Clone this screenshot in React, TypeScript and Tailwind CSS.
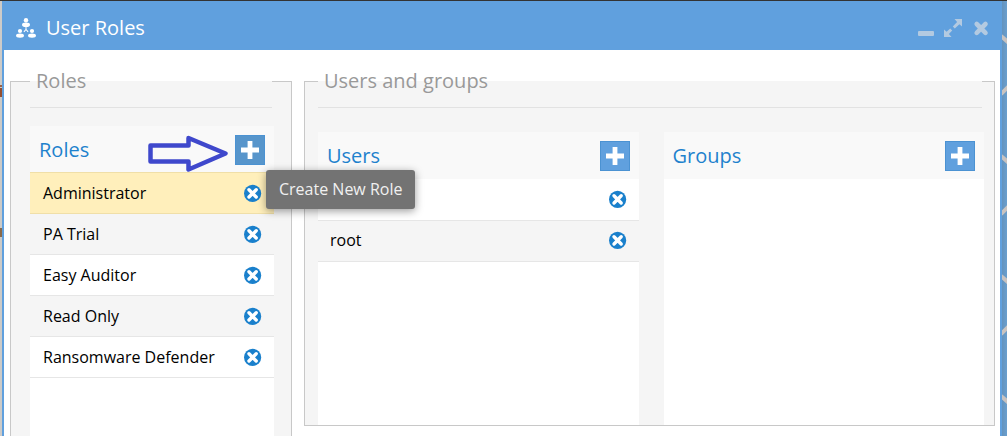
import { useState } from "react";
import type { ReactNode } from "react";

const ROLES = ["Administrator", "PA Trial", "Easy Auditor", "Read Only", "Ransomware Defender"];
const USERS = [
  { id: 1, name: "" },
  { id: 2, name: "root" },
];

function RolesIcon() {
  return (
    <svg viewBox="0 0 20 20" className="h-5 w-5 fill-white" aria-hidden="true">
      <circle cx="10" cy="2.2" r="2.2" />
      <ellipse cx="10" cy="6.8" rx="4" ry="2.3" />
      <path d="M9.5 9h1v2.2l2 2.3-.8.7L10 12.3l-1.7 1.9-.8-.7 2-2.3z" />
      <circle cx="4" cy="13" r="2.1" />
      <ellipse cx="4" cy="17.6" rx="4" ry="2.2" />
      <circle cx="16" cy="13" r="2.1" />
      <ellipse cx="16" cy="17.6" rx="4" ry="2.2" />
    </svg>
  );
}

function AddButton({ label, active = false }: { label: string; active?: boolean }) {
  return (
    <button
      aria-label={label}
      className={`flex h-[30px] w-[30px] items-center justify-center border border-[#4b92d2] ${active ? "bg-[#5795cb]" : "bg-[#60a0de]"}`}
    >
      <svg viewBox="0 0 18 18" className="h-[18px] w-[18px] fill-white" aria-hidden="true">
        <path d="M6.6 0h4.8v6.6H18v4.8h-6.6V18H6.6v-6.6H0V6.6h6.6z" />
      </svg>
    </button>
  );
}

function RemoveButton({ label }: { label: string }) {
  return (
    <button aria-label={label}>
      <svg viewBox="0 0 18 18" className="h-[18px] w-[18px]" aria-hidden="true">
        <circle cx="8.6" cy="9.4" r="8.6" fill="#1a80cc" />
        <path d="M5 5.8l7.200 7.200M12.200 5.800l-7.200 7.200" stroke="#fff" strokeWidth="3.4" strokeLinecap="round" />
      </svg>
    </button>
  );
}

function Section({ title, className, children }: { title: string; className: string; children: ReactNode }) {
  return (
    <fieldset className={`flex flex-col border border-[#c8c8c8] bg-[#f5f5f5] ${className}`}>
      <legend className="w-[calc(100%-2px)] px-1.5 text-xl leading-7 text-[#999]">{title}</legend>
      <hr className="mt-3 mr-0.5 border-[#e2e2e2]" />
      {children}
    </fieldset>
  );
}

function PanelHeader({ title, className, children }: { title: string; className: string; children: ReactNode }) {
  return (
    <div className={`flex items-center justify-between bg-[#f9f9f9] px-[9px] ${className}`}>
      <h2 className="text-xl text-[#1e82cd]">{title}</h2>
      {children}
    </div>
  );
}

// slice of the desktop wallpaper that shows beside the window
function Wallpaper() {
  return (
    <svg className="h-full w-full" aria-hidden="true">
      <defs>
        <pattern id="zigzag" width="5" height="120" patternUnits="userSpaceOnUse">
          <path d="M-1 35l8 7M-1 93l8-8" stroke="#c9c3c0" strokeWidth="4" fill="none" />
        </pattern>
      </defs>
      <rect width="100%" height="100%" fill="url(#zigzag)" />
    </svg>
  );
}

export default function App() {
  const [selected, setSelected] = useState("Administrator");

  return (
    <div className="flex h-screen flex-col overflow-hidden border-t border-[#333] bg-[#d0d0d0] font-['Open_Sans',sans-serif]">
      <div className="flex min-h-0 flex-1">
        <div className="w-0.5 shrink-0 bg-[#cdcbc8]">
          <svg className="h-full w-full" aria-hidden="true">
            <rect y="84" width="2" height="2" fill="#9a6248" />
            <rect y="87" width="2" height="9" fill="#944f30" />
            <rect y="227" width="2" height="9" fill="#8a6a4a" />
          </svg>
        </div>
        <main className="flex min-w-0 flex-1 flex-col border-x-2 border-[#60a0de] bg-white">
          <header className="flex h-[49px] shrink-0 items-center bg-[#60a0de] pt-1 pr-2.5 pl-3">
            <RolesIcon />
            <h1 className="ml-2.5 flex-1 text-xl text-white">User Roles</h1>
            <div className="flex items-center gap-2.5 text-[#b3cae1]">
              <button aria-label="Minimize">
                <svg viewBox="0 0 18 18" className="h-[18px] w-[18px] fill-current">
                  <rect x="2" y="12" width="16" height="5" rx="1" />
                </svg>
              </button>
              <button aria-label="Maximize">
                <svg viewBox="0 0 18 18" className="h-[18px] w-[18px] fill-current">
                  <path d="M10.5 0H18v7.5l-2.6-2.3-4.6 4.3-2-2 4.3-4.6zM7.5 18H0v-7.5l2.6 2.3 3.6-3.3 2 2-3.3 3.6z" />
                </svg>
              </button>
              <button aria-label="Close">
                <svg viewBox="0 0 18 18" className="h-[18px] w-[18px]">
                  <path d="M4.700 5l8.800 8.800M13.500 5l-8.800 8.800" stroke="currentColor" strokeWidth="4.6" strokeLinecap="round" />
                </svg>
              </button>
            </div>
          </header>

          <div className="flex min-h-0 flex-1 gap-3 pt-[17px] pr-[5px] pl-1.5">
            <Section title="Roles" className="w-[282px] shrink-0 border-b-0 pr-[17px] pl-[19px]">
              <div className="relative mt-[18px] flex flex-1 flex-col bg-white">
                <PanelHeader title="Roles" className="h-[46px] pt-0.5">
                  <AddButton label="Add role" active />
                </PanelHeader>
                <ul className="border-t border-[#f0dfa8]">
                  {ROLES.map((role, i) => (
                    <li
                      key={role}
                      className={`flex h-[41px] items-center justify-between border-b pr-3 ${
                        role === selected
                          ? "border-[#f0dfa8] bg-[#ffefbb]"
                          : i % 2 === 1
                            ? "border-[#e6e6e6] bg-[#f5f5f5]"
                            : "border-[#e6e6e6] bg-white"
                      }`}
                    >
                      <button className="flex-1 pl-[13px] text-left text-base text-black" onClick={() => setSelected(role)}>
                        {role}
                      </button>
                      <RemoveButton label={`Remove ${role}`} />
                    </li>
                  ))}
                </ul>
                <svg viewBox="0 0 80 38" className="pointer-events-none absolute top-2 left-[118px] h-[38px] w-20" fill="none" aria-hidden="true">
                  <path d="M2.5 11.5h38V4L77.5 19.5 40.5 35.5v-8h-38z" stroke="#3f48cc" strokeWidth="4.5" strokeLinejoin="round" />
                </svg>
                <div
                  role="tooltip"
                  className="absolute top-11 left-[236px] z-10 rounded-[3px] bg-[#737373] px-[13px] py-2 text-base leading-[23px] whitespace-nowrap text-[#f0f0f0] shadow-[0_2px_8px_rgba(0,0,0,0.4)]"
                >
                  Create New Role
                </div>
              </div>
            </Section>

            <Section title="Users and groups" className="mb-2.5 min-w-0 flex-1 pr-2.5 pl-[13px]">
              <div className="mt-6 flex flex-1 gap-[25px]">
                <div className="flex-1 bg-white">
                  <PanelHeader title="Users" className="h-[47px] pt-px">
                    <AddButton label="Add user" />
                  </PanelHeader>
                  <ul className="pt-px">
                    {USERS.map((user, i) => (
                      <li
                        key={user.id}
                        className={`flex h-[41px] items-center justify-between border-b border-[#e6e6e6] pr-3 pb-0.5 pl-3 text-base text-black ${i % 2 === 1 ? "bg-[#f5f5f5]" : "bg-white"}`}
                      >
                        <span>{user.name}</span>
                        <RemoveButton label={`Remove ${user.name || "user"}`} />
                      </li>
                    ))}
                  </ul>
                </div>
                <div className="flex-1 bg-white">
                  <PanelHeader title="Groups" className="h-[47px] pt-px">
                    <AddButton label="Add group" />
                  </PanelHeader>
                </div>
              </div>
            </Section>
          </div>
        </main>
        <div className="w-[5px] shrink-0 bg-linear-to-r from-[#6493bd] to-[#6a9fce]">
          <Wallpaper />
        </div>
      </div>
    </div>
  );
}
